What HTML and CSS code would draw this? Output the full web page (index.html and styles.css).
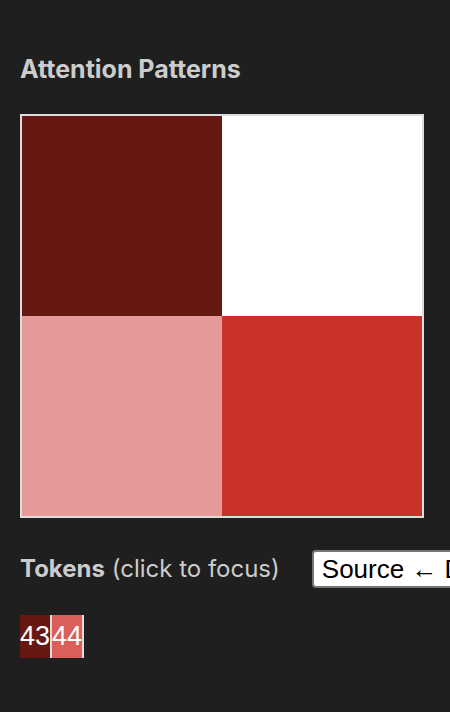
FILE: index.html
```html
<!DOCTYPE html>
<html lang="en">
<head>
<meta charset="utf-8">
<title>Attention Patterns</title>
<link rel="stylesheet" href="styles.css">
</head>
<body>
<main class="panel">
  <h1 class="title">Attention Patterns</h1>
  <div class="pattern">
    <div class="cell cell-darkest"></div>
    <div class="cell cell-white"></div>
    <div class="cell cell-light"></div>
    <div class="cell cell-strong"></div>
  </div>
  <div class="tokens-header">
    <label class="tokens-label" for="direction"><b>Tokens</b> (click to focus)</label>
    <select class="direction" id="direction">
      <option>Source ← Destination</option>
      <option>Destination ← Source</option>
    </select>
  </div>
  <div class="tokens">
    <button class="token token-dark" type="button">43</button>
    <button class="token token-light" type="button">44</button>
  </div>
</main>
</body>
</html>
```
FILE: styles.css
```css
* {
  box-sizing: border-box;
}

body {
  margin: 0;
  background: #1f1f1f;
  color: #cccccc;
  font-family: Inter, sans-serif;
  font-size: 24px;
  font-feature-settings: "calt" 0;
  font-variant-ligatures: none;
  line-height: 32px;
  overflow: hidden;
}

.panel {
  padding: 53px 26px 53px 20px;
}

.title {
  margin: 0 0 29px;
  font-size: 25px;
  font-weight: 700;
}

.pattern {
  display: grid;
  grid-template-columns: 1fr 1fr;
  border: 2px solid #dddddd;
}

.cell {
  aspect-ratio: 1;
}

.cell-darkest {
  background: #681813;
}

.cell-white {
  background: #ffffff;
}

.cell-light {
  background: #e59998;
}

.cell-strong {
  background: #c93228;
}

.tokens-header {
  display: flex;
  align-items: center;
  gap: 32px;
  margin-top: 32px;
  white-space: nowrap;
}

.tokens-label b {
  font-weight: 700;
}

.direction {
  flex: none;
  appearance: none;
  height: 38px;
  padding: 0 8px;
  border: 2px solid #767676;
  border-radius: 4px;
  background: #ffffff;
  color: #000000;
  font: 26px "Liberation Sans", sans-serif;
}

.tokens {
  display: flex;
  margin-top: 27px;
}

.token {
  height: 43px;
  padding: 0;
  border: 0;
  border-right: 2px solid #dddddd;
  color: #ffffff;
  font: 27px "Liberation Sans", sans-serif;
}

.token-dark {
  background: #681813;
}

.token-light {
  background: #d95f5b;
}
```
